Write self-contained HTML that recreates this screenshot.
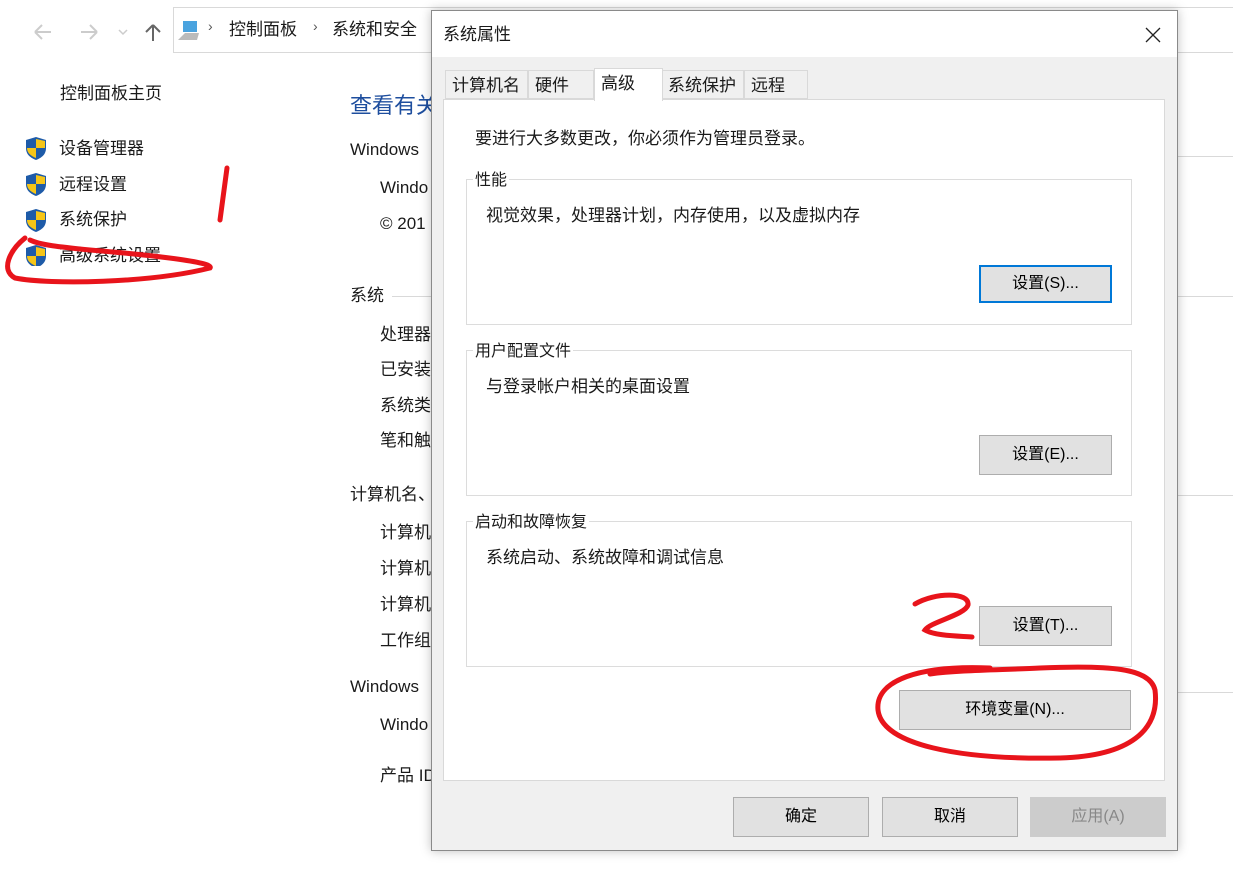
<!DOCTYPE html><html><head><meta charset="utf-8"><style>
*{margin:0;padding:0;box-sizing:border-box}
body{width:1233px;height:883px;background:#fff;position:relative;overflow:hidden;font-family:"Liberation Sans","Noto Sans CJK SC",sans-serif;font-size:17px;color:#1a1a1a}
.a{position:absolute;white-space:nowrap;margin-top:-4px}
.line{position:absolute;height:1px;background:#d9d9d9}
.btn{position:absolute;background:#e1e1e1;border:1px solid #adadad;text-align:center;font-size:16px;color:#000}
.grp{position:absolute;border:1px solid #dcdcdc}
.gl{position:absolute;background:#fff;padding:0 2px;font-size:16px;top:-14px;left:6px}
.tab{position:absolute;top:70px;height:29px;background:#f0f0f0;border:1px solid #d9d9d9;font-size:17px;padding:0 0 0 6px}
</style></head><body>
<svg class="a" style="left:33px;top:24px;margin:0" width="140" height="20" fill="none" stroke-width="2"><path d="M2 8 H18 M2 8 L9 1 M2 8 L9 15" stroke="#ccc"/><path d="M48 8 H64 M64 8 L57 1 M64 8 L57 15" stroke="#ccc"/><path d="M86 6 L90 10 L94 6" stroke="#ccc" stroke-width="1.5"/><path d="M120 17 V1 M120 1 L113 8 M120 1 L127 8" stroke="#666"/></svg>
<div style="position:absolute;left:173px;top:7px;width:1070px;height:46px;border:1px solid #d9d9d9"></div>
<svg class="a" style="left:177px;top:20px;margin:0" width="26" height="22"><rect x="6" y="1" width="14" height="11" fill="#4aa3df"/><path d="M1 20 L8 13 H22 L20 20Z" fill="#bbb"/></svg>
<div class="a" style="left:208px;top:22px;color:#555;font-size:14px">›</div>
<div class="a" style="left:229px;top:19px">控制面板</div>
<div class="a" style="left:313px;top:22px;color:#555;font-size:14px">›</div>
<div class="a" style="left:332px;top:19px">系统和安全</div>
<div class="a" style="left:60px;top:83px">控制面板主页</div>
<svg class="a" style="left:24px;top:136px;margin:0" width="24" height="130">
<g id="s"><path d="M12 1 L22 4 V12 C22 19 17 22 12 24 C7 22 2 19 2 12 V4Z" fill="#1e5ba8"/><path d="M12 3 V12 H21 V5Z M12 12 V22 C7 20 3 17 3 12Z" fill="#f5c518"/></g>
<use href="#s" y="36"/><use href="#s" y="72"/><use href="#s" y="108"/></svg>
<div class="a" style="left:59px;top:138px">设备管理器</div>
<div class="a" style="left:59px;top:174px">远程设置</div>
<div class="a" style="left:59px;top:209px">系统保护</div>
<div class="a" style="left:59px;top:245px">高级系统设置</div>
<div class="a" style="left:350px;top:92px;color:#1e4e9e;font-size:22px">查看有关</div>
<div class="a" style="left:350px;top:144px">Windows</div>
<div class="a" style="left:380px;top:182px">Windo</div>
<div class="a" style="left:380px;top:218px">© 201</div>
<div class="a" style="left:350px;top:285px">系统</div><div class="line" style="left:392px;top:296px;width:841px"></div>
<div class="a" style="left:380px;top:324px">处理器</div>
<div class="a" style="left:380px;top:359px">已安装</div>
<div class="a" style="left:380px;top:395px">系统类</div>
<div class="a" style="left:380px;top:430px">笔和触</div>
<div class="a" style="left:350px;top:484px">计算机名、</div><div class="line" style="left:440px;top:495px;width:793px"></div>
<div class="a" style="left:380px;top:522px">计算机</div>
<div class="a" style="left:380px;top:558px">计算机</div>
<div class="a" style="left:380px;top:594px">计算机</div>
<div class="a" style="left:380px;top:630px">工作组</div>
<div class="a" style="left:350px;top:681px">Windows</div><div class="line" style="left:440px;top:692px;width:793px"></div>
<div class="a" style="left:380px;top:719px">Windo</div>
<div class="a" style="left:380px;top:765px">产品 ID</div>
<div class="line" style="left:1170px;top:156px;width:63px"></div>

<div style="position:absolute;left:431px;top:10px;width:747px;height:841px;background:#f0f0f0;border:1px solid #8a8a8a;box-shadow:0 0 10px rgba(0,0,0,.25)">
<div style="position:absolute;left:0;top:0;width:745px;height:46px;background:#fff"></div>
<div class="a" style="left:11px;top:13px">系统属性</div>
<svg style="position:absolute;left:713px;top:16px" width="16" height="16" stroke="#222" stroke-width="1.3"><path d="M1 1 L15 15 M15 1 L1 15"/></svg>
</div>
<div style="position:absolute;left:443px;top:99px;width:722px;height:682px;background:#fff;border:1px solid #d9d9d9"></div>
<div class="tab" style="left:445px;width:83px">计算机名</div>
<div class="tab" style="left:528px;width:66px">硬件</div>
<div class="tab" style="left:661px;width:83px">系统保护</div>
<div class="tab" style="left:744px;width:64px">远程</div>
<div class="tab" style="left:594px;top:68px;width:69px;height:33px;background:#fff;border-bottom:none;padding-top:0">高级</div>
<div class="a" style="left:475px;top:128px">要进行大多数更改，你必须作为管理员登录。</div>
<div class="grp" style="left:466px;top:179px;width:666px;height:146px"><div class="gl">性能</div></div>
<div class="a" style="left:486px;top:205px">视觉效果，处理器计划，内存使用，以及虚拟内存</div>
<div class="btn" style="left:979px;top:265px;width:133px;height:38px;border:2px solid #0078d7;line-height:34px">设置(S)...</div>
<div class="grp" style="left:466px;top:350px;width:666px;height:146px"><div class="gl">用户配置文件</div></div>
<div class="a" style="left:486px;top:376px">与登录帐户相关的桌面设置</div>
<div class="btn" style="left:979px;top:435px;width:133px;height:40px;line-height:38px">设置(E)...</div>
<div class="grp" style="left:466px;top:521px;width:666px;height:146px"><div class="gl">启动和故障恢复</div></div>
<div class="a" style="left:486px;top:547px">系统启动、系统故障和调试信息</div>
<div class="btn" style="left:979px;top:606px;width:133px;height:40px;line-height:38px">设置(T)...</div>
<div class="btn" style="left:899px;top:690px;width:232px;height:40px;line-height:38px">环境变量(N)...</div>
<div class="btn" style="left:733px;top:797px;width:136px;height:40px;line-height:38px">确定</div>
<div class="btn" style="left:882px;top:797px;width:136px;height:40px;line-height:38px">取消</div>
<div class="btn" style="left:1030px;top:797px;width:136px;height:40px;line-height:38px;color:#888;border-color:#ccc;background:#ccc">应用(A)</div>

<svg class="a" style="left:0;top:0;margin:0" width="1233" height="883" fill="none" stroke="#e8141b" stroke-width="5" stroke-linecap="round">
<path d="M227 168 L220 220"/>
<path d="M25 238 C10 250 0 270 15 278 C50 285 150 283 210 268 C215 262 150 255 90 250 C60 247 40 245 30 240"/>
<path d="M915 604 C935 592 970 592 968 605 C965 615 930 622 925 630 C935 636 960 636 972 637"/>
<path d="M990 668 C920 665 875 680 878 710 C882 745 960 760 1060 758 C1130 756 1160 730 1155 690 C1150 668 1110 665 1040 668 C1000 670 960 670 930 674"/>
</svg>
</body></html>
